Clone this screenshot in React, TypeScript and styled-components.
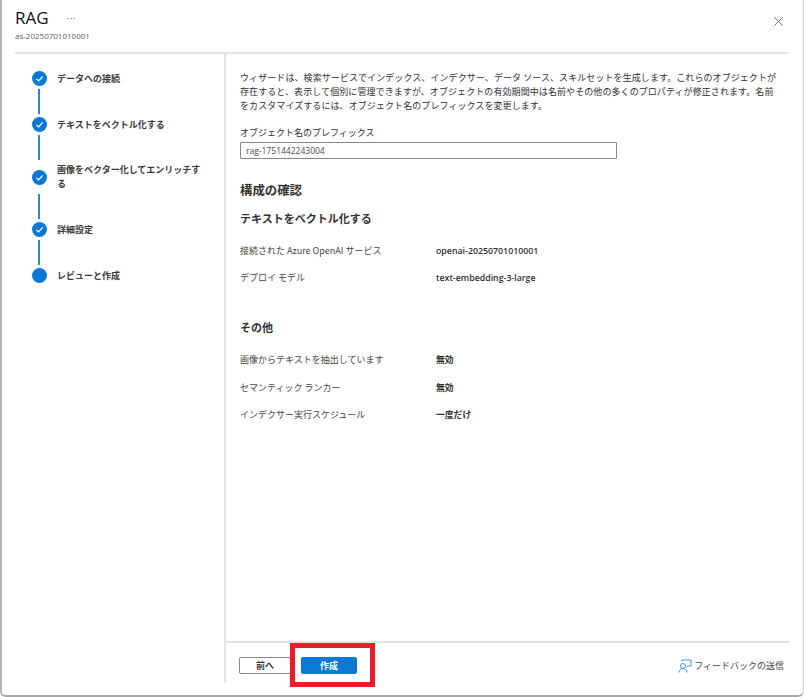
import React from "react";
import styled, { createGlobalStyle } from "styled-components";

const Global = createGlobalStyle`
  html, body { margin: 0; padding: 0; background: #fff; }
  body { font-family: "Open Sans", "Noto Sans CJK JP", sans-serif; color: #323130; }
  * { box-sizing: border-box; }
`;

const Shell = styled.div`
  width: 804px;
  height: 697px;
  display: flex;
  flex-direction: column;
  background: #fff;
  border-left: 2px solid #b4b4b0;
  border-right: 1px solid #c8c8c8;
  border-bottom: 2px solid #a8a8a8;
  border-radius: 0 0 6px 6px;
  padding-left: 13px;
  padding-right: 14px;
  overflow: hidden;
`;

const Header = styled.header`
  height: 54px;
  flex: none;
  border-bottom: 2px solid #e3e3e3;
  display: flex;
  justify-content: space-between;
  padding-top: 7px;
`;

const TitleRow = styled.div`
  display: flex;
  align-items: center;
  gap: 18px;
  height: 22px;
`;

const Title = styled.h1`
  margin: 0;
  font: 500 17px/22px "Open Sans", sans-serif;
  color: #111;
`;

const More = styled.span`
  font: 400 10px/10px "Open Sans", sans-serif;
  color: #777;
  letter-spacing: 0.5px;
`;

const Subtitle = styled.div`
  font: 400 8px/11px "Open Sans", sans-serif;
  color: #605e5c;
  margin-top: 1px;
`;

const CloseButton = styled.button`
  border: 0;
  background: none;
  padding: 0;
  width: 9px;
  height: 9px;
  margin: 7px 6px 0 0;
  display: block;
  color: #666;
`;

const Body = styled.div`
  flex: 1;
  min-height: 0;
  display: flex;
`;

const Sidebar = styled.nav`
  width: 211px;
  flex: none;
  padding: 17px 10px 0 17px;
  border-right: 2px solid #e3e3e3;
  margin-bottom: 12px;
`;

const Step = styled.div`
  display: flex;
  gap: 10px;
  align-items: center;
  min-height: 15px;
`;

const StepDot = styled.span`
  width: 15px;
  height: 15px;
  flex: none;
  border-radius: 50%;
  background: #0b78d6;
  display: flex;
  align-items: center;
  justify-content: center;
`;

const StepLabel = styled.span`
  width: 148px;
  font: 700 9px/14px "Noto Sans CJK JP", sans-serif;
  color: #3b3a39;
`;

const Connector = styled.div`
  width: 2px;
  height: 25px;
  margin: 3px 0 3px 6px;
  background: #2b88d8;
`;

const Main = styled.main`
  flex: 1;
  min-width: 0;
  display: flex;
  flex-direction: column;
`;

const Content = styled.div`
  flex: 1;
  min-height: 0;
  padding: 17px 10px 0 14px;
`;

const Intro = styled.p`
  margin: 0;
  font: 400 9px/14px "Noto Sans CJK JP", sans-serif;
  letter-spacing: 0.08px;
  color: #323130;
  width: 545px;
`;

const FieldLabel = styled.label`
  display: block;
  margin-top: 13px;
  font: 400 9px/14px "Noto Sans CJK JP", sans-serif;
  color: #323130;
`;

const TextInput = styled.div`
  width: 377px;
  height: 17px;
  margin-top: 2px;
  border: 1px solid #8a8886;
  border-radius: 1px;
  padding-left: 5px;
  font: 400 8.5px/15px "Open Sans", sans-serif;
  color: #4a4a4a;
`;

const SectionTitle = styled.h2`
  margin: 22px 0 0;
  font: 700 12.4px/18px "Noto Sans CJK JP", sans-serif;
  color: #323130;
`;

const SubTitle = styled.h3<{ $top: number }>`
  margin: ${(p) => p.$top}px 0 0;
  font: 700 11px/18px "Noto Sans CJK JP", sans-serif;
  color: #323130;
`;

const Rows = styled.dl`
  margin: 10.5px 0 0;
  display: grid;
  grid-template-columns: 196px 1fr;
  grid-auto-rows: 27.3px;
  align-items: center;
`;

const RowKey = styled.dt`
  font: 400 9px/14px "Noto Sans CJK JP", "Open Sans", sans-serif;
  color: #484644;
`;

const RowValue = styled.dd`
  margin: 0;
  font: 600 8.8px/14px "Open Sans", "Noto Sans CJK JP", sans-serif;
  color: #323130;
`;

const Footer = styled.footer`
  flex: none;
  height: 41px;
  border-top: 2px solid #e3e3e3;
  display: flex;
  align-items: flex-start;
  padding: 14px 5px 0 13px;
  gap: 10px;
  margin-bottom: 13px;
`;

const Button = styled.button`
  width: 52px;
  height: 17px;
  padding: 0;
  border: 1px solid #8a8886;
  border-radius: 2px;
  background: #fff;
  font: 700 9px/15px "Noto Sans CJK JP", sans-serif;
  color: #3b3a39;
`;

const PrimaryWrap = styled.div`
  position: relative;
`;

const PrimaryButton = styled(Button)`
  width: 56px;
  display: block;
  background: #0b78d6;
  border-color: #0b78d6;
  color: #fff;
`;

const Highlight = styled.div`
  position: absolute;
  left: -11px;
  top: -14px;
  width: 85px;
  height: 44px;
  border: 5px solid #ee1c25;
  pointer-events: none;
`;

const Feedback = styled.a`
  margin-left: auto;
  display: flex;
  align-items: center;
  gap: 2px;
  font: 400 9px/17px "Noto Sans CJK JP", sans-serif;
  color: #484644;
`;

const Check = () => (
  <svg width="9" height="9" viewBox="0 0 10 10" fill="none" aria-hidden="true">
    <path d="M1.5 5.4 L4 7.6 L8.6 2.6" stroke="#fff" strokeWidth="1.4" />
  </svg>
);

const steps = [
  "データへの接続",
  "テキストをベクトル化する",
  "画像をベクター化してエンリッチする",
  "詳細設定",
  "レビューと作成",
];

export default function App() {
  return (
    <Shell>
      <Global />
      <Header>
        <div>
          <TitleRow>
            <Title>RAG</Title>
            <More>···</More>
          </TitleRow>
          <Subtitle>as-20250701010001</Subtitle>
        </div>
        <CloseButton aria-label="閉じる">
          <svg width="9" height="9" viewBox="0 0 9 9" fill="none">
            <path d="M0.3 0.3 L8.7 8.7 M8.7 0.3 L0.3 8.7" stroke="currentColor" strokeWidth="0.9" />
          </svg>
        </CloseButton>
      </Header>
      <Body>
        <Sidebar>
          {steps.map((s, i) => (
            <React.Fragment key={s}>
              <Step>
                <StepDot>{i < 4 && <Check />}</StepDot>
                <StepLabel>{s}</StepLabel>
              </Step>
              {i < 4 && <Connector />}
            </React.Fragment>
          ))}
        </Sidebar>
        <Main>
          <Content>
            <Intro>
              ウィザードは、検索サービスでインデックス、インデクサー、データ ソース、スキルセットを生成します。これらのオブジェクトが
              <br />
              存在すると、表示して個別に管理できますが、オブジェクトの有効期間中は名前やその他の多くのプロパティが修正されます。名前
              <br />
              をカスタマイズするには、オブジェクト名のプレフィックスを変更します。
            </Intro>
            <FieldLabel>オブジェクト名のプレフィックス</FieldLabel>
            <TextInput>rag-1751442243004</TextInput>
            <SectionTitle>構成の確認</SectionTitle>
            <SubTitle $top={10}>テキストをベクトル化する</SubTitle>
            <Rows>
              <RowKey>接続された Azure OpenAI サービス</RowKey>
              <RowValue>openai-20250701010001</RowValue>
              <RowKey>デプロイ モデル</RowKey>
              <RowValue>text-embedding-3-large</RowValue>
            </Rows>
            <SubTitle $top={26}>その他</SubTitle>
            <Rows>
              <RowKey>画像からテキストを抽出しています</RowKey>
              <RowValue>無効</RowValue>
              <RowKey>セマンティック ランカー</RowKey>
              <RowValue>無効</RowValue>
              <RowKey>インデクサー実行スケジュール</RowKey>
              <RowValue>一度だけ</RowValue>
            </Rows>
          </Content>
          <Footer>
            <Button>前へ</Button>
            <PrimaryWrap>
              <PrimaryButton>作成</PrimaryButton>
              <Highlight />
            </PrimaryWrap>
            <Feedback>
              <svg width="14" height="14" viewBox="0 0 14 14" fill="none" stroke="#2b88d8" strokeWidth="0.9">
                <circle cx="5" cy="7" r="2.5" />
                <path d="M1 13.5 C1 10.5 3 9.6 5 9.6 C7 9.6 9 10.5 9 13.5" />
                <path d="M4 2.5 V1 H13 V7 H10 L8.6 8.4" />
              </svg>
              フィードバックの送信
            </Feedback>
          </Footer>
        </Main>
      </Body>
    </Shell>
  );
}
